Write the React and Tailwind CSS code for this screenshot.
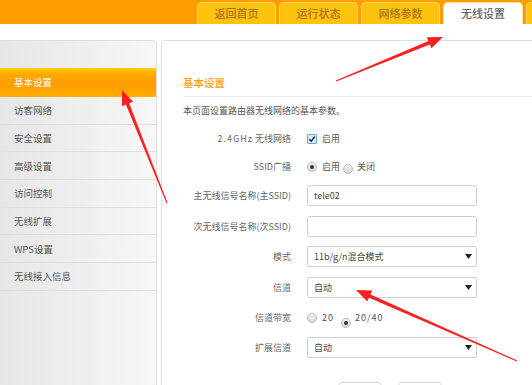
import React from "react";

function arrowPoints(tx, ty, hx, hy, headLen = 15, headHalf = 6, shaftHead = 1.8, shaftTail = 0.5) {
  const dx = hx - tx, dy = hy - ty;
  const len = Math.hypot(dx, dy);
  const ux = dx / len, uy = dy / len;
  const nx = -uy, ny = ux;
  const bx = hx - ux * headLen, by = hy - uy * headLen;
  const pts = [
    [tx + nx * shaftTail, ty + ny * shaftTail],
    [bx + nx * shaftHead, by + ny * shaftHead],
    [bx + nx * headHalf, by + ny * headHalf],
    [hx, hy],
    [bx - nx * headHalf, by - ny * headHalf],
    [bx - nx * shaftHead, by - ny * shaftHead],
    [tx - nx * shaftTail, ty - ny * shaftTail],
  ];
  return pts.map((p) => p.map((v) => v.toFixed(1)).join(",")).join(" ");
}

const tabs = ["返回首页", "运行状态", "网络参数", "无线设置"];
const menu = ["访客网络", "安全设置", "高级设置", "访问控制", "无线扩展", "WPS设置", "无线接入信息"];

function Radio({ checked }) {
  return (
    <span className="inline-flex items-center justify-center w-[10px] h-[10px] rounded-full border border-[#b9b9b9] bg-gradient-to-b from-[#f4f4f4] to-[#d8d8d8]">
      {checked && <span className="w-[4px] h-[4px] rounded-full bg-[#333]" />}
    </span>
  );
}

function Caret() {
  return (
    <svg width="7" height="5" viewBox="0 0 7 5" className="ml-auto mr-[4px]">
      <path d="M0 0 H7 L3.5 5 Z" fill="#222" />
    </svg>
  );
}

function Select({ value }) {
  return (
    <div className="flex items-center w-[170px] h-[21px] border border-[#cfcfcf] rounded-[2px] pl-[6px] text-[9px] text-[#444] bg-white">
      <span>{value}</span>
      <Caret />
    </div>
  );
}

function Input({ value }) {
  return (
    <div className="flex items-center w-[170px] h-[21px] border border-[#cfcfcf] rounded-[3px] pl-[6px] text-[9px] text-[#444] bg-white">
      {value}
    </div>
  );
}

function Row({ label, children, className = "" }) {
  return (
    <div className={"flex items-center h-[21px] " + className}>
      <div className="w-[108px] text-right text-[9px] text-[#666] whitespace-nowrap">{label}</div>
      <div className="ml-[16px] flex items-center">{children}</div>
    </div>
  );
}

export default function App() {
  return (
    <div
      className="relative w-[532px] h-[385px] overflow-hidden bg-white"
      style={{ fontFamily: "'Noto Sans CJK SC', 'Noto Sans', sans-serif" }}
    >
      {/* top bar */}
      <div className="h-[24px] bg-[#ff9c00] flex items-end pl-[197px] gap-[3px]">
        {tabs.map((t, i) => {
          const active = i === 3;
          return (
            <div
              key={t}
              className={
                "shrink-0 h-[22px] rounded-t-[5px] border border-b-0 flex items-center justify-center text-[11px] font-medium " +
                (active
                  ? "w-[80px] bg-white border-[#ffe0a0] text-[#666]"
                  : "w-[79px] bg-[#ffc20e] border-[#ffd970] text-[#a7760e]")
              }
            >
              {t}
            </div>
          );
        })}
        <div className="shrink-0 w-[60px] h-[22px] rounded-t-[5px] border border-b-0 border-[#ffd970] bg-[#ffc20e]" />
      </div>

      {/* body */}
      <div className="flex gap-[4px] pt-[16px]">
        {/* sidebar */}
        <div className="w-[157px] h-[345px] shrink-0 border-t border-r border-[#dcdcdc] rounded-tr-[5px] bg-gradient-to-r from-[#e6e6e6] to-[#f7f7f7]">
          <div className="h-[27px]" />
          <div className="h-[29px] flex items-center pl-[14px] text-[9.5px] text-white bg-[linear-gradient(to_bottom,#ffd000_0%,#ffa800_22%,#ff9c00_60%,#ffb000_100%)]">
            基本设置
          </div>
          {menu.map((m) => (
            <div
              key={m}
              className="h-[27.7px] flex items-center pl-[14px] text-[9.5px] text-[#555] border-b border-[#dedede]"
            >
              {m}
            </div>
          ))}
        </div>

        {/* main panel */}
        <div className="w-[420px] shrink-0 h-[345px] border-t border-l border-[#dcdcdc] rounded-tl-[5px] bg-white pl-[21px]">
          <div className="pt-[35px] pb-[6px] border-b border-[#ececec] text-[10.5px] leading-[14px] text-[#ff9c00] font-medium">
            基本设置
          </div>
          <div className="mt-[8px] text-[9px] leading-[12px] text-[#555]">本页面设置路由器无线网络的基本参数。</div>

          <Row
            label={
              <>
                <span className="tracking-[1px]">2.4GHz</span> 无线网络
              </>
            }
            className="mt-[11px]"
          >
            <span className="flex items-center justify-center w-[10px] h-[10px] border border-[#6ea6e0] bg-[#dbeafb] rounded-[1px]">
              <svg width="8" height="8" viewBox="0 0 8 8">
                <path d="M1.2 4.2 L3.2 6.2 L6.8 1.6" stroke="#222" strokeWidth="1.5" fill="none" />
              </svg>
            </span>
            <span className="ml-[5px] text-[9px] text-[#555]">启用</span>
          </Row>
          <Row label="SSID广播" className="mt-[7px]">
            <Radio checked />
            <span className="ml-[5px] text-[9px] text-[#555]">启用</span>
            <span className="ml-[3px]"><Radio /></span>
            <span className="ml-[4px] text-[9px] text-[#555]">关闭</span>
          </Row>
          <Row label="主无线信号名称(主SSID)" className="mt-[8px]">
            <Input value="tele02" />
          </Row>
          <Row label="次无线信号名称(次SSID)" className="mt-[10px]">
            <Input value="" />
          </Row>
          <Row label="模式" className="mt-[9px]">
            <Select value="11b/g/n混合模式" />
          </Row>
          <Row label="信道" className="mt-[10px]">
            <Select value="自动" />
          </Row>
          <Row label="信道带宽" className="mt-[9px]">
            <Radio />
            <span className="ml-[5px] text-[9px] text-[#555] tracking-[1px]">20</span>
            <span className="ml-[7px]"><Radio checked /></span>
            <span className="ml-[4px] text-[9px] text-[#555] tracking-[1px]">20/40</span>
          </Row>
          <Row label="扩展信道" className="mt-[9px]">
            <Select value="自动" />
          </Row>
          <div className="flex gap-[16px] ml-[155px] mt-[24px]">
            <div className="w-[44px] h-[22px] border border-[#d4d4d4] rounded-[4px] bg-white" />
            <div className="w-[44px] h-[22px] border border-[#d4d4d4] rounded-[4px] bg-white" />
          </div>
        </div>
      </div>

      {/* annotation arrows */}
      <svg className="absolute inset-0 pointer-events-none" width="532" height="385" viewBox="0 0 532 385">
        <polygon points={arrowPoints(336, 81, 443, 37)} fill="#ff1f1f" />
        <polygon points={arrowPoints(167, 203, 122, 90)} fill="#ff1f1f" />
        <polygon points={arrowPoints(517, 361, 356, 290)} fill="#ff1f1f" />
      </svg>
    </div>
  );
}
